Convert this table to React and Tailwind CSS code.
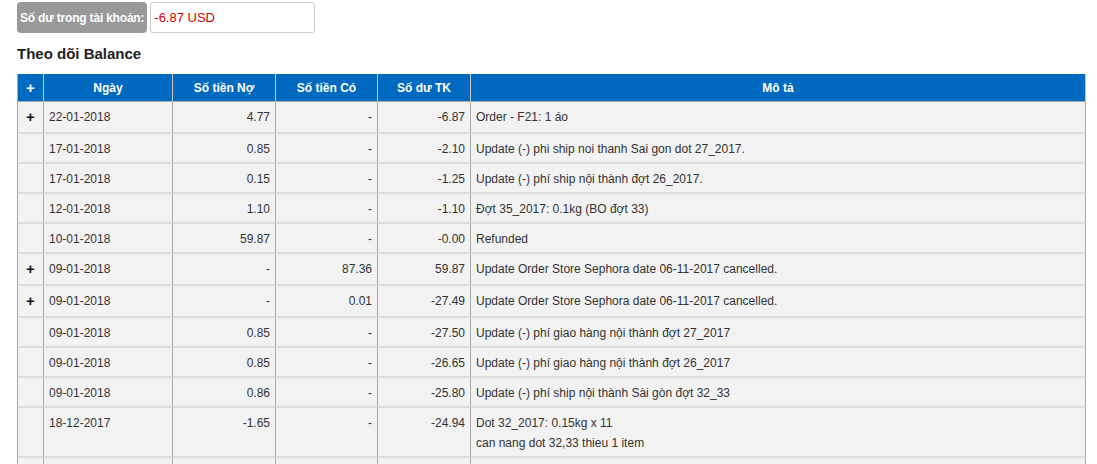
import React from 'react'

// ─── Data (mirrors the balance screenshot) ────────────────────────────────────
const ROWS = [
  { plus: true,  date: '22-01-2018', debit: '4.77',  credit: '-',     bal: '-6.87',  desc: ['Order - F21: 1 áo'] },
  { plus: false, date: '17-01-2018', debit: '0.85',  credit: '-',     bal: '-2.10',  desc: ['Update (-) phi ship noi thanh Sai gon dot 27_2017.'] },
  { plus: false, date: '17-01-2018', debit: '0.15',  credit: '-',     bal: '-1.25',  desc: ['Update (-) phí ship nội thành đợt 26_2017.'] },
  { plus: false, date: '12-01-2018', debit: '1.10',  credit: '-',     bal: '-1.10',  desc: ['Đợt 35_2017: 0.1kg (BO đợt 33)'] },
  { plus: false, date: '10-01-2018', debit: '59.87', credit: '-',     bal: '-0.00',  desc: ['Refunded'] },
  { plus: true,  date: '09-01-2018', debit: '-',     credit: '87.36', bal: '59.87',  desc: ['Update Order Store Sephora date 06-11-2017 cancelled.'] },
  { plus: true,  date: '09-01-2018', debit: '-',     credit: '0.01',  bal: '-27.49', desc: ['Update Order Store Sephora date 06-11-2017 cancelled.'] },
  { plus: false, date: '09-01-2018', debit: '0.85',  credit: '-',     bal: '-27.50', desc: ['Update (-) phí giao hàng nội thành đợt 27_2017'] },
  { plus: false, date: '09-01-2018', debit: '0.85',  credit: '-',     bal: '-26.65', desc: ['Update (-) phí giao hàng nội thành đợt 26_2017'] },
  { plus: false, date: '09-01-2018', debit: '0.86',  credit: '-',     bal: '-25.80', desc: ['Update (-) phí ship nội thành Sài gòn đợt 32_33'] },
  { plus: false, date: '18-12-2017', debit: '-1.65', credit: '-',     bal: '-24.94', desc: ['Dot 32_2017: 0.15kg x 11', 'can nang dot 32,33 thieu 1 item'] },
  // next row only peeks in at the bottom edge
  { plus: false, date: '', debit: '', credit: '', bal: '', desc: [''] },
]

const td = 'border-r border-b-2 border-r-[#a9a9a9] border-b-[#dddddd] bg-[#f2f2f2] px-[5px] pt-[5px] align-top'
const th = 'h-[28px] border-r border-r-[#c9c9c9] border-b border-b-[#a9a9a9] bg-[#0069c0] text-center font-bold text-white'

export default function App() {
  return (
    <div className="h-[464px] overflow-hidden bg-white pl-[17px] pt-[2px] font-['Liberation_Sans',Arial,sans-serif] text-[12px] text-[#333]">

      {/* ── Balance box ─────────────────────────────────────────────────── */}
      <div className="flex h-[31px] gap-[3px]">
        <div className="flex items-center rounded-[4px] bg-[#999999] px-[3px] text-[12px] font-bold tracking-[-0.2px] text-white">
          Số dư trong tài khoản:
        </div>
        <div className="flex w-[165px] items-center rounded-[3px] border border-[#cccccc] bg-white px-[3px] text-[13px] text-[#cc0000]">
          -6.87 USD
        </div>
      </div>

      {/* ── Title ───────────────────────────────────────────────────────── */}
      <h2 className="mt-[11px] mb-[10px] text-[15px] font-bold leading-[20px] text-[#222]">
        Theo dõi Balance
      </h2>

      {/* ── Balance table ───────────────────────────────────────────────── */}
      <table className="w-[1069px] table-fixed border-separate border-spacing-0 border-l border-l-[#a9a9a9] leading-[20px]">
        <colgroup>
          <col className="w-[26px]" />
          <col className="w-[129px]" />
          <col className="w-[103px]" />
          <col className="w-[102px]" />
          <col className="w-[93px]" />
          <col />
        </colgroup>
        <thead>
          <tr>
            <th className={`${th} text-[15px] text-[#222]`}>+</th>
            <th className={th}>Ngày</th>
            <th className={th}>Số tiền Nợ</th>
            <th className={th}>Số tiền Có</th>
            <th className={th}>Số dư TK</th>
            <th className={`${th} border-r-[#a9a9a9]`}>Mô tả</th>
          </tr>
        </thead>
        <tbody>
          {ROWS.map((r, i) => {
            const pb = r.plus ? 'pb-[5px]' : 'pb-[3px]'
            return (
              <tr key={i}>
                <td className={`${td} ${pb} text-center text-[15px] font-bold text-[#111]`}>{r.plus ? '+' : ''}</td>
                <td className={`${td} ${pb}`}>{r.date}</td>
                <td className={`${td} ${pb} text-right`}>{r.debit}</td>
                <td className={`${td} ${pb} text-right`}>{r.credit}</td>
                <td className={`${td} ${pb} text-right`}>{r.bal}</td>
                <td className={`${td} ${pb}`}>
                  {r.desc.map((line, j) => <div key={j} className="min-h-[20px]">{line}</div>)}
                </td>
              </tr>
            )
          })}
        </tbody>
      </table>
    </div>
  )
}
